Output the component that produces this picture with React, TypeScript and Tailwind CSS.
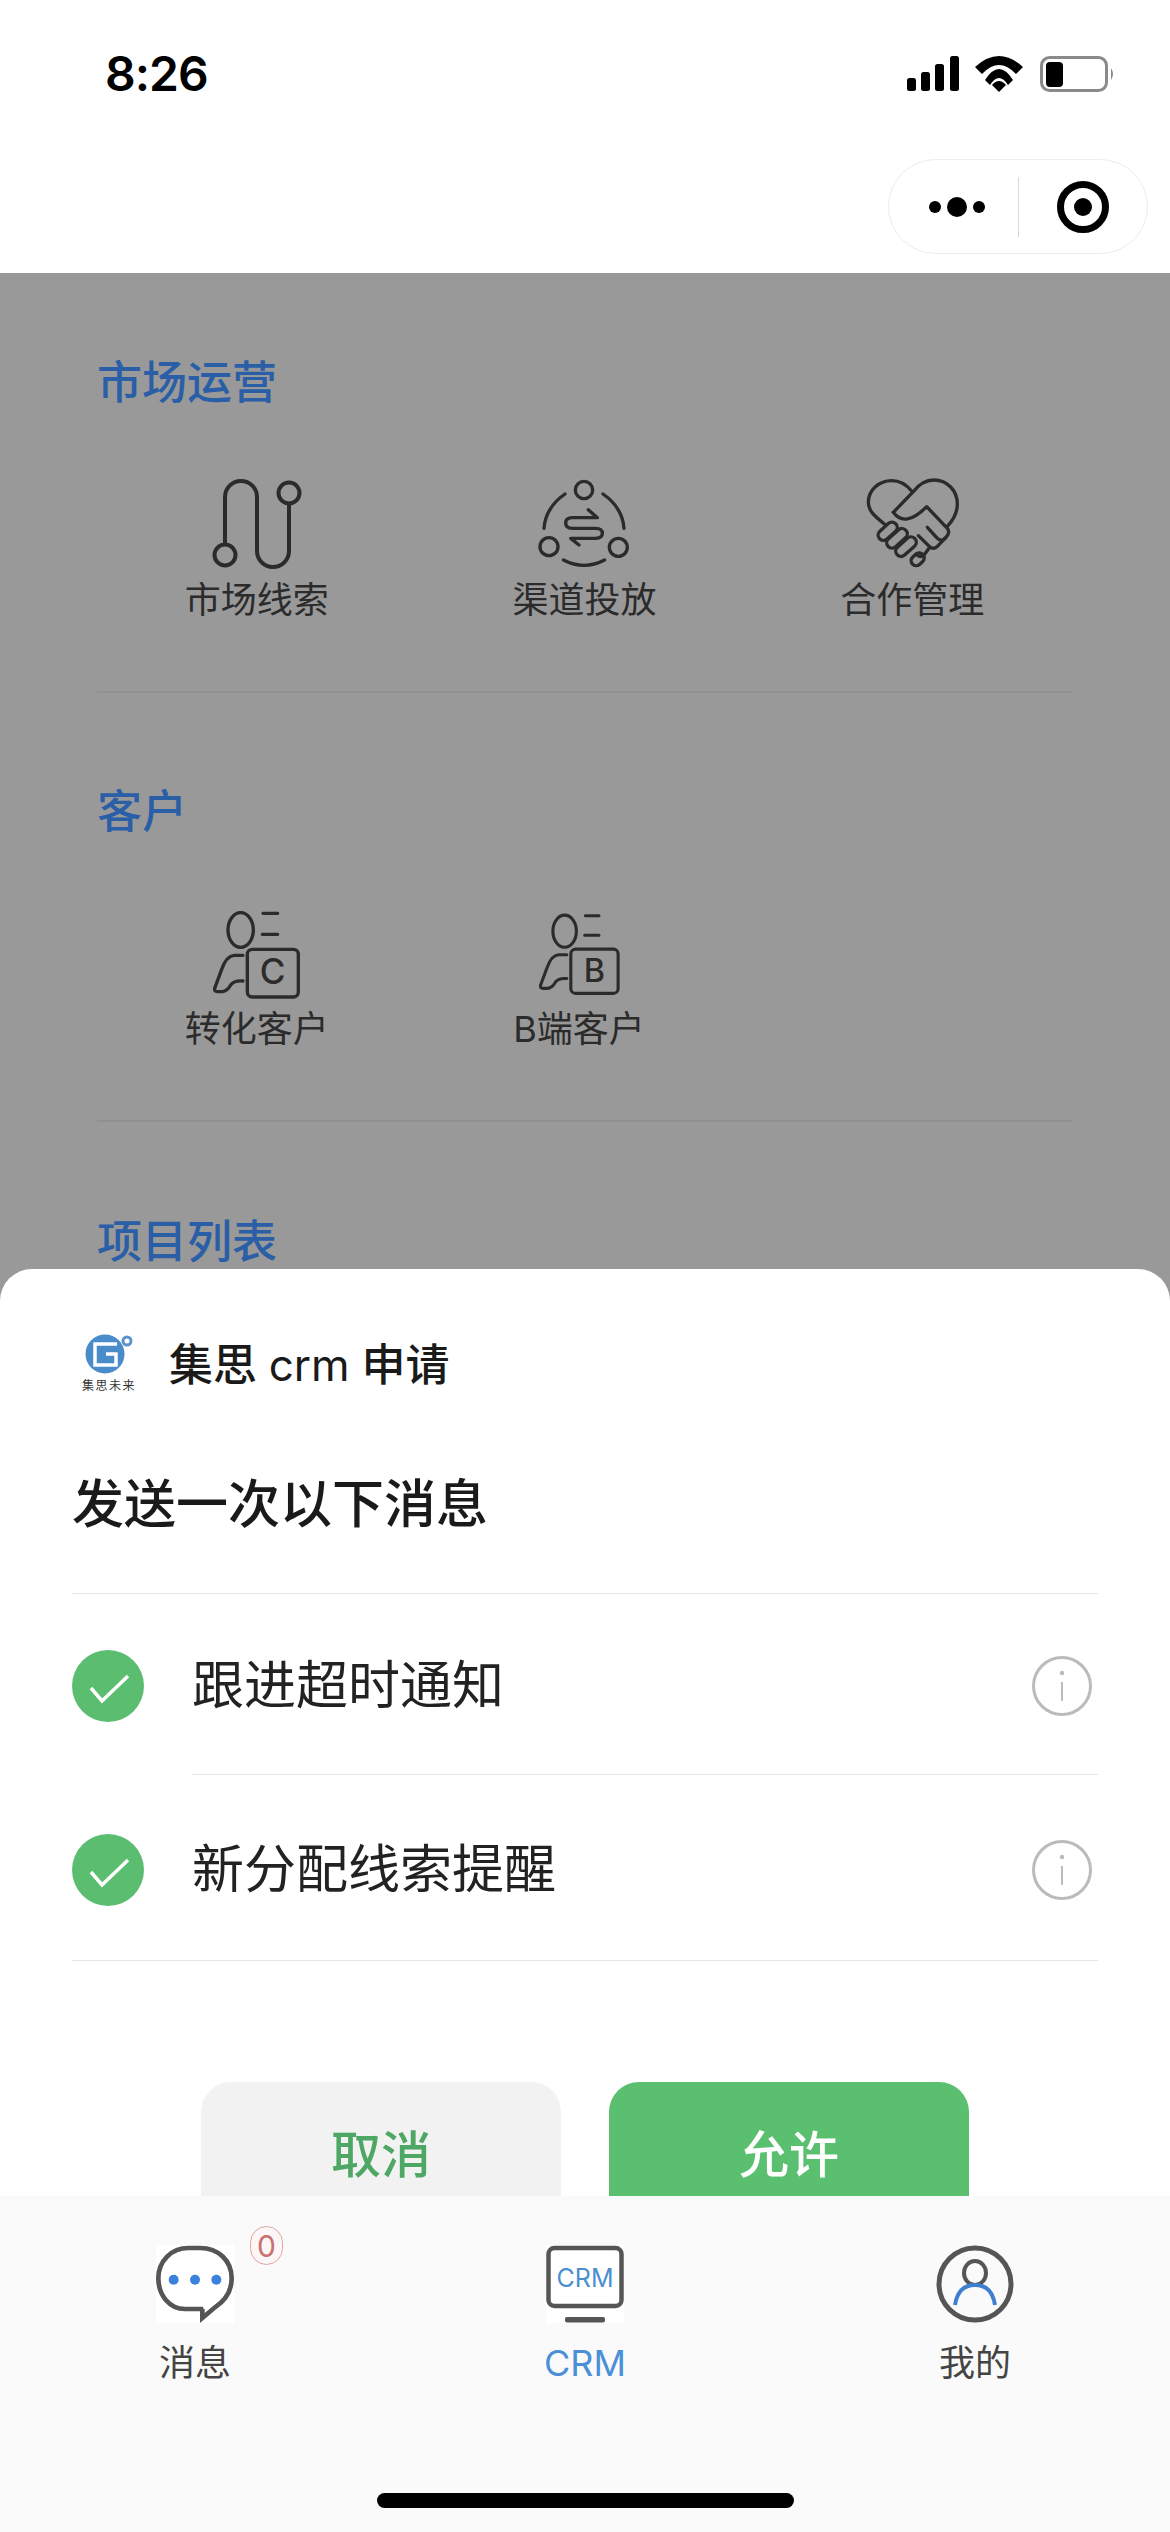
const ink = "#2b2b2b";

const LeadsIcon = () => (
  <svg width="90" height="90" viewBox="0 0 90 90" fill="none" stroke={ink} strokeWidth="4">
    <circle cx="13" cy="76" r="10.5" />
    <circle cx="77" cy="14" r="10.5" />
    <path d="M13 65V18A16 16 0 0 1 45 18V72A16 16 0 0 0 77 72V25" />
  </svg>
);

const ChannelIcon = () => (
  <svg width="110" height="110" viewBox="0 0 330 330" fill="none" stroke={ink} strokeWidth="10" strokeLinecap="round" strokeLinejoin="round">
    <circle cx="165" cy="63" r="26" />
    <circle cx="60" cy="233" r="27" />
    <circle cx="268" cy="235" r="27" />
    <path d="M45 178Q50 115 108 75" />
    <path d="M285 178Q280 115 222 75" />
    <path d="M103 273Q165 305 227 273" />
    <path d="M178 122L205 146H130Q110 146 110 162Q110 178 130 178H200Q220 178 220 193Q220 208 200 208H125L150 228" />
  </svg>
);

const DealIcon = () => (
  <svg width="125" height="110" viewBox="0 0 375 330" fill="none" stroke={ink} strokeWidth="10" strokeLinecap="round" strokeLinejoin="round">
    <path d="M103 165C72 140 55 125 55 100C55 62 88 35 125 35C150 35 170 48 185 66" />
    <path d="M130 130L190 68C205 48 228 33 252 33C292 33 322 65 322 105C322 130 308 155 292 172" />
    <path d="M130 130Q165 178 230 113L292 178Q302 190 288 205Q275 220 262 208L232 175" />
    <path d="M288 205L262 232Q250 244 238 232L205 200" />
    <path d="M240 234L222 258Q212 268 198 256" />
    <rect x="80" y="171" width="66" height="32" rx="16" transform="rotate(-42 113 187)" />
    <rect x="105" y="192" width="72" height="32" rx="16" transform="rotate(-42 141 208)" />
    <rect x="132" y="217" width="72" height="32" rx="16" transform="rotate(-42 168 233)" />
    <rect x="182" y="256" width="42" height="30" rx="15" transform="rotate(-42 203 271)" />
  </svg>
);

const CustomerIcon = ({ letter, className }: { letter: string; className: string }) => (
  <svg className={className} viewBox="0 0 330 315" fill="none" stroke={ink} strokeWidth="10" strokeLinecap="round" strokeLinejoin="round">
    <ellipse cx="125" cy="87" rx="38" ry="52" />
    <path d="M192 37H236M190 100H236" />
    <rect x="145" y="145" width="153" height="143" rx="15" />
    <path d="M132 163H105Q82 165 68 205L47 262Q45 272 55 272H70Q85 270 95 252Q105 238 132 240" />
    <text x="221" y="250" textAnchor="middle" fontSize="105" fontWeight="500" fill={ink} stroke="none" fontFamily="Inter, sans-serif">
      {letter}
    </text>
  </svg>
);

const sections = [
  {
    title: "市场运营",
    items: [
      { label: "市场线索", icon: <LeadsIcon />, cell: "" },
      { label: "渠道投放", icon: <ChannelIcon />, cell: "" },
      { label: "合作管理", icon: <DealIcon />, cell: "" },
    ],
  },
  {
    title: "客户",
    items: [
      { label: "转化客户", icon: <CustomerIcon letter="C" className="w-[110px] h-[105px] mr-[6px]" />, cell: "" },
      { label: "B端客户", icon: <CustomerIcon letter="B" className="w-[102px] h-[98px] mr-[3px]" />, cell: "pr-[11px]" },
    ],
  },
];

const StatusBar = () => (
  <div className="h-[148px] flex items-center justify-between pl-[105px] pr-[55px]">
    <span className="text-[48px] leading-[60px] font-semibold tracking-[-1px] text-black">8:26</span>
    <div className="flex items-center">
      <svg width="52" height="36" viewBox="0 0 52 36" fill="#000">
        <rect x="0" y="22" width="9" height="13" rx="2.5" />
        <rect x="14" y="16" width="9" height="19" rx="2.5" />
        <rect x="28" y="8" width="9" height="27" rx="2.5" />
        <rect x="43" y="0" width="9" height="35" rx="2.5" />
      </svg>
      <svg className="ml-[16px]" width="48" height="37" viewBox="0 0 48 37" fill="#000">
        <path d="M0 11Q24 -11 48 11L41 18Q24 0 7 18Z" />
        <path d="M10 24Q24 2 38 24L33 29Q24 15 15 29Z" />
        <path d="M17 29Q24 21 31 29L24 36Z" />
      </svg>
      <svg className="ml-[17px]" width="75" height="36" viewBox="0 0 75 36" fill="none">
        <rect x="1.5" y="1.5" width="65" height="33" rx="8" stroke="#8a8a8a" strokeWidth="3" />
        <rect x="6" y="6" width="17" height="25" rx="4" fill="#000" />
        <path d="M71 12Q75 18 71 24Z" fill="#8a8a8a" />
      </svg>
    </div>
  </div>
);

const Capsule = () => (
  <div className="flex justify-end pr-[22px] mt-[11px] mb-[19px]">
    <div className="w-[260px] h-[95px] rounded-full border border-[#ececec] bg-white flex items-center">
      <svg className="ml-[40px]" width="56" height="20" viewBox="0 0 56 20" fill="#000">
        <circle cx="6" cy="10" r="6" />
        <circle cx="28" cy="10" r="10" />
        <circle cx="50" cy="10" r="6" />
      </svg>
      <div className="w-px h-[60px] bg-[#d8d8d8] ml-[33px]" />
      <svg className="ml-[38px]" width="52" height="52" viewBox="0 0 52 52" fill="none">
        <circle cx="26" cy="26" r="22.5" stroke="#000" strokeWidth="7" />
        <circle cx="26" cy="26" r="9" fill="#000" />
      </svg>
    </div>
  </div>
);

const Logo = () => (
  <svg width="80" height="80" viewBox="0 0 80 80" fill="none">
    <circle cx="35" cy="29" r="19.5" fill="#4a8bc9" />
    <path d="M47 19H25V40H46V29H36" stroke="#fff" strokeWidth="3.5" />
    <circle cx="57" cy="16" r="4" stroke="#5a94cc" strokeWidth="3" />
    <text x="39" y="65" textAnchor="middle" fontSize="12" letterSpacing="1.5" fill="#333">
      集思未来
    </text>
  </svg>
);

const CheckDot = () => (
  <svg width="72" height="72" viewBox="0 0 72 72" className="shrink-0">
    <circle cx="36" cy="36" r="36" fill="#5bbd6f" />
    <path d="M19 38L30 51L56 26" fill="none" stroke="#fff" strokeWidth="3.5" />
  </svg>
);

const InfoIcon = () => (
  <svg width="60" height="60" viewBox="0 0 60 60" fill="none" className="shrink-0 mr-[6px]">
    <circle cx="30" cy="30" r="28.5" stroke="#bbb" strokeWidth="3" />
    <circle cx="30" cy="17" r="2.2" fill="#bbb" />
    <path d="M30 26V45" stroke="#bbb" strokeWidth="2" />
  </svg>
);

const notices = [
  { label: "跟进超时通知", row: "h-[180px]" },
  { label: "新分配线索提醒", row: "h-[185px]" },
];

const MessageIcon = () => (
  <svg width="78" height="78" viewBox="48 88 234 234" fill="none">
    <rect x="48" y="88" width="234" height="234" fill="#fff" />
    <path
      d="M190 280H135C90 280 55 240 55 188C55 135 95 97 145 97H180C235 97 275 135 275 188C275 225 255 255 225 275L187 307V280"
      stroke="#555"
      strokeWidth="14"
    />
    <circle cx="101" cy="192" r="15" fill="#3b82dc" />
    <circle cx="165" cy="192" r="15" fill="#3b82dc" />
    <circle cx="229" cy="192" r="15" fill="#3b82dc" />
  </svg>
);

const CrmIcon = () => (
  <svg width="78" height="78" viewBox="0 0 78 78" fill="none">
    <rect width="78" height="78" fill="#fff" />
    <rect x="2.5" y="3" width="73" height="58" rx="6" stroke="#555" strokeWidth="4.5" />
    <text x="39" y="42" textAnchor="middle" fontSize="25" fill="#4a8fd0" fontFamily="Inter, sans-serif">
      CRM
    </text>
    <rect x="19" y="72" width="40" height="5.5" rx="2" fill="#555" />
  </svg>
);

const MeIcon = () => (
  <svg width="78" height="78" viewBox="0 0 78 78" fill="none">
    <circle cx="39" cy="39" r="36" stroke="#555" strokeWidth="5" />
    <ellipse cx="39" cy="28" rx="11" ry="12" stroke="#555" strokeWidth="4" />
    <path d="M19 60Q22 40 39 40Q56 40 59 60" stroke="#3f7fd0" strokeWidth="4" />
  </svg>
);

const App = () => {
  return (
    <div className="w-[1170px] h-[2532px] overflow-hidden bg-[#999999] font-['Inter','Noto_Sans_CJK_SC',sans-serif]">
      <header className="bg-white h-[273px]">
        <StatusBar />
        <Capsule />
      </header>

      <main className="h-[996px] overflow-hidden">
        {sections.map((section, i) => (
          <section key={section.title} className={i === 0 ? "pt-[80px]" : "pt-[89px]"}>
            <h2 className="pl-[97px] text-[45px] leading-[60px] font-medium text-[#2a5ea6]">{section.title}</h2>
            <div className="grid grid-cols-3 w-[983px] ml-[93px] mt-[59px]">
              {section.items.map((item) => (
                <div key={item.label} className={`flex flex-col items-center ${item.cell}`}>
                  <div className="h-[104px] flex items-center justify-center">{item.icon}</div>
                  <span className="text-[36px] leading-[48px] text-[#2b2b2b]">{item.label}</span>
                </div>
              ))}
            </div>
            <div className="h-[2px] bg-[#909090] ml-[97px] w-[975px] mt-[67px]" />
          </section>
        ))}
        <h2 className="pl-[97px] pt-[90px] text-[45px] leading-[60px] font-medium text-[#2a5ea6]">项目列表</h2>
      </main>

      <div className="h-[927px] overflow-hidden rounded-t-[32px] bg-white">
        <div className="flex items-center pl-[70px] pt-[56px]">
          <Logo />
          <span className="ml-[19px] text-[44px] leading-[60px] font-medium text-[#1a1a1a]">
            集思 <span className="font-normal">crm</span> 申请
          </span>
        </div>
        <h1 className="pl-[72px] mt-[65px] text-[52px] leading-[70px] font-medium text-[#1a1a1a]">发送一次以下消息</h1>
        <div className="mx-[72px] mt-[53px] border-t border-[#e5e5e5]">
          {notices.map((notice, i) => (
            <div key={notice.label}>
              <div className={`flex items-center pt-[4px] ${notice.row}`}>
                <CheckDot />
                <span className="ml-[48px] flex-1 text-[52px] leading-[70px] text-[#222222]">{notice.label}</span>
                <InfoIcon />
              </div>
              <div className={i === 0 ? "h-px bg-[#e5e5e5] ml-[120px]" : "h-px bg-[#e5e5e5]"} />
            </div>
          ))}
        </div>
        <div className="flex gap-[48px] pl-[201px] mt-[121px]">
          <button className="w-[360px] h-[146px] rounded-[30px] bg-[#f2f2f2] text-[50px] font-medium text-[#4fa765]">取消</button>
          <button className="w-[360px] h-[146px] rounded-[30px] bg-[#5abf6e] text-[50px] font-medium text-white">允许</button>
        </div>
      </div>

      <nav className="h-[336px] bg-[#fafafa]">
        <div className="grid grid-cols-3 pt-[49px]">
          <div className="flex flex-col items-center">
            <div className="relative">
              <MessageIcon />
              <span className="absolute left-[94px] -top-[19px] w-[33px] h-[39px] rounded-full border border-[#dca6a6] bg-[#fdf6f6] flex items-center justify-center text-[30px] leading-none text-[#c87070]">
                0
              </span>
            </div>
            <span className="mt-[16px] text-[36px] leading-[48px] text-[#444444]">消息</span>
          </div>
          <div className="flex flex-col items-center">
            <CrmIcon />
            <span className="mt-[16px] text-[36px] leading-[48px] text-[#4a8fd8]">CRM</span>
          </div>
          <div className="flex flex-col items-center">
            <MeIcon />
            <span className="mt-[16px] text-[36px] leading-[48px] text-[#444444]">我的</span>
          </div>
        </div>
        <div className="w-[417px] h-[15px] rounded-full bg-black mx-auto mt-[106px]" />
      </nav>
    </div>
  );
};

export default App;
